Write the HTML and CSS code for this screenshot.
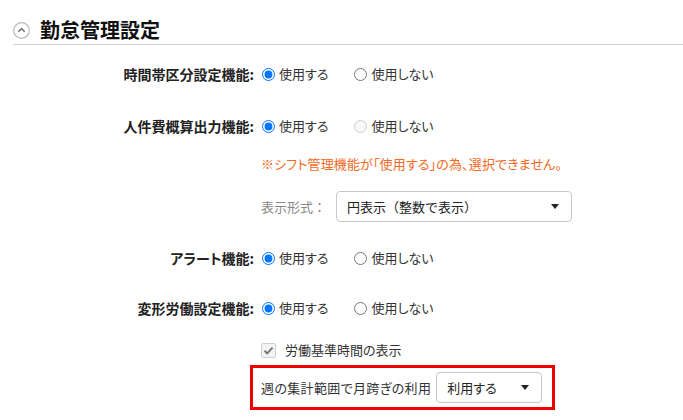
FILE: index.html
```html
<!DOCTYPE html>
<html lang="ja">
<head>
<meta charset="utf-8">
<link rel="stylesheet" href="styles.css">
</head>
<body>
<div class="section">
  <div class="header">
    <span class="toggle"><svg width="17" height="17" viewBox="0 0 17 17"><circle cx="8.5" cy="8.5" r="7.8" fill="#fff" stroke="#bbb" stroke-width="1.2"/><path d="M5.3 9.8 L8.5 6.6 L11.7 9.8" fill="none" stroke="#777" stroke-width="1.6"/></svg></span>
    <h2 class="title">勤怠管理設定</h2>
  </div>

  <div class="row r1">
    <div class="label">時間帯区分設定機能:</div>
    <div class="opts">
      <label class="opt"><input type="radio" name="a" checked><span>使用する</span></label>
      <label class="opt"><input type="radio" name="a"><span>使用しない</span></label>
    </div>
  </div>

  <div class="row r2">
    <div class="label">人件費概算出力機能:</div>
    <div class="opts">
      <label class="opt"><input type="radio" name="b" checked><span>使用する</span></label>
      <label class="opt"><input type="radio" name="b" disabled><span>使用しない</span></label>
    </div>
  </div>

  <div class="warn">※シフト管理機能が「使用する」の為、選択できません。</div>

  <div class="fmt">
    <span class="fmt-label">表示形式：</span>
    <div class="select wide"><span class="plain">円表示（整数で表示）</span><span class="caret"></span></div>
  </div>

  <div class="row r3">
    <div class="label">アラート機能:</div>
    <div class="opts">
      <label class="opt"><input type="radio" name="c" checked><span>使用する</span></label>
      <label class="opt"><input type="radio" name="c"><span>使用しない</span></label>
    </div>
  </div>

  <div class="row r4">
    <div class="label">変形労働設定機能:</div>
    <div class="opts">
      <label class="opt"><input type="radio" name="d" checked><span>使用する</span></label>
      <label class="opt"><input type="radio" name="d"><span>使用しない</span></label>
    </div>
  </div>

  <div class="check">
    <span class="cbox"><svg width="13" height="13" viewBox="0 0 13 13"><path d="M2.5 6.8 L5.2 9.4 L10.6 3.6" fill="none" stroke="#777" stroke-width="2"/></svg></span>
    <span>労働基準時間の表示</span>
  </div>

  <div class="hl">
    <span class="hl-text">週の集計範囲で月跨ぎの利用</span>
    <div class="select small"><span>利用する</span><span class="caret"></span></div>
  </div>
</div>
</body>
</html>
```

FILE: styles.css
```css
html, body {
  margin: 0;
  padding: 0;
  background: #fff;
}
body {
  font-family: "Noto Sans CJK JP", "Noto Sans", sans-serif;
  font-size: 13px;
  font-feature-settings: "palt";
  color: #333;
}
.section {
  width: 683px;
}
.header {
  display: flex;
  align-items: center;
  margin-left: 13px;
  height: 45px;
  border-bottom: 1px solid #d0d0d0;
  box-sizing: border-box;
  padding-top: 16px;
}
.toggle {
  display: flex;
  width: 17px;
  height: 17px;
  margin-right: 10px;
}
.title {
  margin: 0;
  font-size: 20px;
  font-weight: bold;
  color: #111;
  line-height: 24px;
  font-feature-settings: normal;
}
.row {
  display: flex;
  align-items: center;
  height: 20px;
  line-height: 20px;
}
.r1 { margin-top: 19px; }
.r2 { margin-top: 32px; }
.r3 { margin-top: 26px; }
.r4 { margin-top: 30px; }
.label {
  width: 254px;
  text-align: right;
  font-size: 14px;
  font-weight: bold;
  color: #222;
}
.opts {
  display: flex;
  align-items: center;
  margin-left: 8px;
}
.opt {
  display: flex;
  align-items: center;
  margin-right: 26px;
}
.opt input {
  margin: 0 4px 0 0;
  width: 13px;
  height: 13px;
}
.warn {
  margin-top: 18px;
  margin-left: 261px;
  color: #f26a24;
  line-height: 20px;
  height: 20px;
  letter-spacing: 0.15px;
}
.fmt {
  display: flex;
  align-items: center;
  margin-top: 17px;
  margin-left: 261px;
}
.fmt-label {
  color: #888;
  width: 75px;
  font-feature-settings: normal;
}
.plain {
  font-feature-settings: normal;
}
.select {
  display: flex;
  align-items: center;
  justify-content: space-between;
  box-sizing: border-box;
  height: 31px;
  border: 1px solid #c8c8c8;
  border-radius: 4px;
  padding: 0 12px 0 10px;
  color: #222;
  background: #fff;
}
.select.wide { width: 236px; }
.select.small { width: 106px; }
.caret {
  width: 0;
  height: 0;
  border-left: 4.5px solid transparent;
  border-right: 4.5px solid transparent;
  border-top: 5px solid #222;
}
.check {
  display: flex;
  align-items: center;
  margin-top: 22px;
  margin-left: 261px;
  height: 20px;
  line-height: 20px;
}
.cbox {
  display: flex;
  align-items: center;
  justify-content: center;
  width: 15px;
  height: 15px;
  box-sizing: border-box;
  border: 1px solid #cfcfcf;
  border-radius: 2px;
  background: #f4f4f4;
  margin-right: 9px;
}
.hl {
  display: flex;
  align-items: center;
  box-sizing: border-box;
  margin-top: 5px;
  margin-left: 250px;
  width: 305px;
  height: 45px;
  border: 3px solid #ee0000;
  padding-left: 8px;
  color: #333;
}
.hl-text {
  letter-spacing: 0.35px;
}
.hl .select {
  margin-left: 5px;
}
```
